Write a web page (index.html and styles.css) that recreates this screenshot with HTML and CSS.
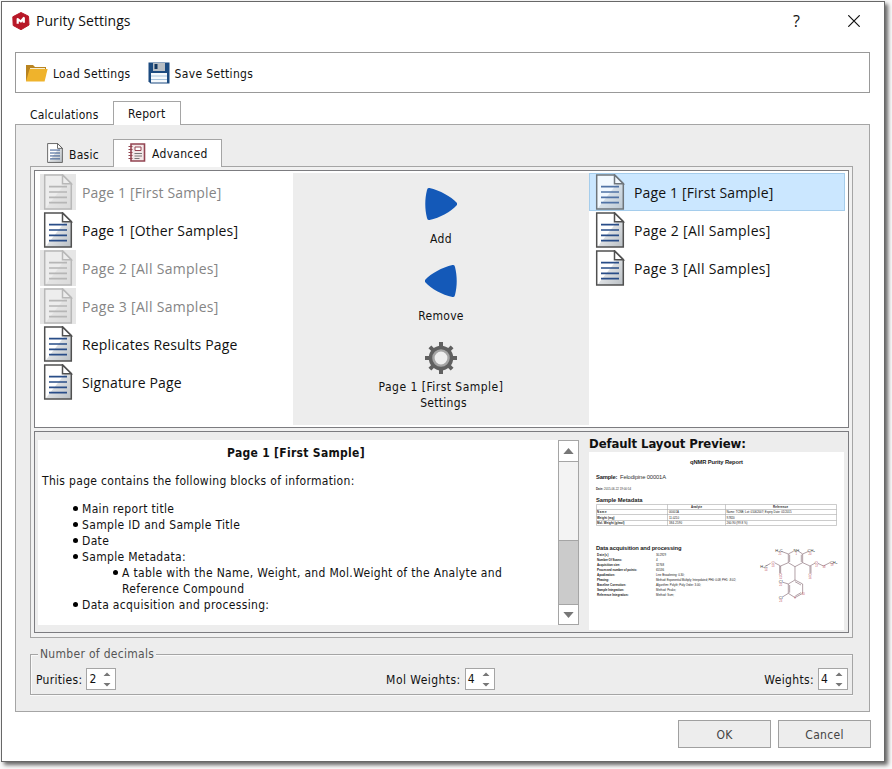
FILE: index.html
```html
<!DOCTYPE html>
<html lang="en">
<head>
<meta charset="utf-8">
<title>Purity Settings</title>
<link rel="stylesheet" href="styles.css">
</head>
<body>
<svg class="defs" aria-hidden="true">
  <defs>
    <linearGradient id="paper" x1="0" y1="0" x2="1" y2="1">
      <stop offset="0.5" stop-color="#fff"/><stop offset="0.52" stop-color="#dde0e3"/><stop offset="1" stop-color="#b9bfc4"/>
    </linearGradient>
    <symbol id="page" viewBox="0 0 36 36">
      <path d="M4.7 1h18l8.600 8.500V35H4.700z" fill="url(#paper)" stroke="#505050" stroke-width="1.500"/>
      <path d="M22.500 1v8.700h8.800z" fill="#fff" stroke="#505050" stroke-width="1.500"/>
      <path d="M9 12.700h18M9 18h18M9 23.300h18M9 28.600h18" stroke="#294d88" stroke-width="1.700"/>
    </symbol>
  </defs>
</svg>
<main class="window">
  <header class="titlebar">
    <svg class="logo" viewBox="0 0 18 18"><path d="M9 .5 16.500 4.200 17 13 9 17.700 1.200 13.500.800 4.800z" fill="#b81828" stroke="#b81828" stroke-linejoin="round"/><path d="M5.700 11.800V7l3.200 2.500L11.800 6v4.800" fill="none" stroke="#fff" stroke-width="2.200" stroke-linejoin="round"/></svg>
    <h1>Purity Settings</h1>
    <span class="help">?</span>
    <svg class="close" viewBox="0 0 12 12"><path d="M.3.300l11.400 11.400M11.700.300.300 11.700" stroke="#111" stroke-width="1.200"/></svg>
  </header>

  <div class="toolbar">
    <div class="tool">
      <svg class="folder" viewBox="0 0 23 18"><path d="M1 17V1h7l2 2h11v4z" fill="#b98420"/><path d="M5 4h15v4H5z" fill="#f7eed2"/><path d="M1 17.500 4.600 5h18l-3 12.500z" fill="#efb32c"/></svg>
      <span class="t-load">Load Settings</span>
    </div>
    <div class="tool">
      <svg class="disk" viewBox="0 0 22 22"><path d="M.5.500h21v21h-19l-2-2z" fill="#1c4b80"/><path d="M5 1h12v8H5z" fill="#b8bec4"/><path d="M6.500 2h3v5h-3z" fill="#123761"/><path d="M3 11h16v9.500H3z" fill="#f5f9fc"/><path d="M3 14h16M3 17.500h16" stroke="#a8c3dc"/></svg>
      <span class="t-save">Save Settings</span>
    </div>
  </div>

  <nav class="tabs outer-tabs">
    <span class="tab idle calc">Calculations</span>
    <span class="tab active report">Report</span>
  </nav>

  <section class="panel">
    <nav class="tabs inner-tabs">
      <span class="tab idle basic"><svg class="mini" viewBox="4 0 28 36"><use href="#page" width="36" height="36"/></svg><span>Basic</span></span>
      <span class="tab active advanced"><svg class="book" viewBox="0 0 18 19"><path d="M3 1h13.500v17H3z" fill="#f3e8e8" stroke="#934452" stroke-width="1.600"/><path d="M.5 3.500h4M.5 6.500h4M.5 9.500h4M.5 12.500h4M.5 15.500h4" stroke="#93444f" stroke-width="1.200"/><path d="M7 4h6v3.500H7z" fill="#fff" stroke="#934452"/><path d="M6.500 10.500h7.500M6.500 13h7.500M6.500 15.500h5" stroke="#777"/></svg><span>Advanced</span></span>
    </nav>

    <div class="subpanel">
      <div class="pane chooser">
        <ul class="list">
          <li class="disabled"><svg><use href="#page"/></svg><span class="w-first">Page 1 [First Sample]</span></li>
          <li><svg><use href="#page"/></svg><span class="w-other">Page 1 [Other Samples]</span></li>
          <li class="disabled"><svg><use href="#page"/></svg><span class="w-all">Page 2 [All Samples]</span></li>
          <li class="disabled"><svg><use href="#page"/></svg><span class="w-all">Page 3 [All Samples]</span></li>
          <li><svg><use href="#page"/></svg><span class="w-rep">Replicates Results Page</span></li>
          <li><svg><use href="#page"/></svg><span class="w-sig">Signature Page</span></li>
        </ul>
        <div class="actions">
          <div class="action add"><svg viewBox="0 0 32 32"><path d="M4.500 0C15 2.500 26 8.500 31.500 14.500Q33 16 31.500 17.500C26 23.500 15 30 4.500 32Q2.500 32.300 2 30C-.3 21-.3 11 2 2Q2.500-.300 4.500 0z" fill="#1459b8"/></svg><span>Add</span></div>
          <div class="action remove"><svg viewBox="0 0 32 32"><path d="M27.500 0C17 2.500 6 8.500.500 14.500Q-1 16 .500 17.500C6 23.500 17 30 27.500 32Q29.500 32.300 30 30C32.300 21 32.300 11 30 2Q29.500-.300 27.500 0z" fill="#1459b8"/></svg><span>Remove</span></div>
          <div class="action config"><svg viewBox="0 0 32 32"><g stroke="#606060" stroke-width="4"><path d="M16 0v32M0 16h32M4.900 4.900l22.200 22.200M27.100 4.900 4.900 27.100"/></g><circle cx="16" cy="16" r="9.800" fill="#eee" stroke="#606060" stroke-width="5"/><circle cx="16" cy="16" r="7.600" fill="#eee" stroke="#a5a5a5" stroke-width="2.400"/></svg><span class="t-conf">Page 1 [First Sample]</span><span class="t-conf2">Settings</span></div>
        </div>
        <ul class="list">
          <li class="selected"><svg><use href="#page"/></svg><span class="w-first">Page 1 [First Sample]</span></li>
          <li><svg><use href="#page"/></svg><span class="w-all">Page 2 [All Samples]</span></li>
          <li><svg><use href="#page"/></svg><span class="w-all">Page 3 [All Samples]</span></li>
        </ul>
      </div>

      <div class="pane details">
        <div class="description">
          <article>
            <h2>Page 1 [First Sample]</h2>
            <p>This page contains the following blocks of information:</p>
            <ul>
              <li>Main report title</li>
              <li>Sample ID and Sample Title</li>
              <li>Date</li>
              <li>Sample Metadata:
                <ul><li>A table with the Name, Weight, and Mol.Weight of the Analyte and<br>Reference Compound</li></ul>
              </li>
              <li>Data acquisition and processing:</li>
            </ul>
          </article>
          <div class="scrollbar">
            <span class="sb-btn"><svg viewBox="0 0 12 7"><path d="M0 7 6 0l6 7z"/></svg></span>
            <span class="thumb"></span>
            <span class="sb-btn bottom"><svg viewBox="0 0 12 7"><path d="M0 0l6 7 6-7z"/></svg></span>
          </div>
        </div>
        <div class="preview">
          <h3>Default Layout Preview:</h3>
          <svg class="sheet" viewBox="0 0 255 178">
            <g font-weight="bold" fill="#222">
              <text x="101" y="12" font-size="5.800" textLength="53">qNMR Purity Report</text>
              <text x="7" y="27.300" font-size="5.800" textLength="21.500">Sample:</text>
              <text x="7" y="50" font-size="5.800" textLength="46.500">Sample Metadata</text>
              <text x="7" y="98.300" font-size="5.800" textLength="85.500">Data acquisition and processing</text>
            </g>
            <text x="31" y="27.300" font-size="5.800" textLength="46">Felodipine 00001A</text>
            <text x="7" y="37.500" font-size="2.900" textLength="35"><tspan font-weight="bold">Date:</tspan> 2015-06-22 19:00:54</text>
            <path d="M7.500 52.500h240v21h-240zM7.500 57.500h240M7.500 62.500h240M7.500 68.500h240M78.500 52.500v21M136.500 52.500v21" fill="none" stroke="#aaa" stroke-width=".6"/>
            <g font-size="2.900" fill="#222">
              <g font-weight="bold">
                <text x="102" y="56" textLength="11">Analyte</text>
                <text x="184" y="56" textLength="15">Reference</text>
                <text x="8" y="61.300" textLength="9.500">Name</text>
                <text x="8" y="66.600" textLength="17.500">Weight (mg)</text>
                <text x="8" y="72" textLength="27.500">Mol. Weight (g/mol)</text>
              </g>
              <text x="80" y="61.300" textLength="10">00001A</text>
              <text x="80" y="66.600" textLength="10">11.0210</text>
              <text x="80" y="72" textLength="13">384.2590</text>
              <text x="137.500" y="61.300" textLength="65">Name: TCNB; Lot: 01062007; Expiry Date: 01/2015</text>
              <text x="137.500" y="66.600" textLength="8">9.7820</text>
              <text x="137.500" y="72" textLength="21">260.90 (99.8 %)</text>
            </g>
            <g font-size="3" font-weight="bold" fill="#222">
              <text x="8" y="103.500" textLength="11.500">Date(s)</text>
              <text x="8" y="108.500" textLength="25">Number Of Scans:</text>
              <text x="8" y="113.500" textLength="23">Acquisition size:</text>
              <text x="8" y="118.500" textLength="40">Processed number of points:</text>
              <text x="8" y="123.500" textLength="18">Apodization:</text>
              <text x="8" y="128.500" textLength="12">Phasing:</text>
              <text x="8" y="133.500" textLength="29">Baseline Correction:</text>
              <text x="8" y="138.500" textLength="27">Sample Integration:</text>
              <text x="8" y="143.500" textLength="31.500">Reference Integration:</text>
            </g>
            <g font-size="2.900" fill="#222">
              <text x="67" y="103.500" textLength="10">30.2929</text>
              <text x="67" y="108.500">4</text>
              <text x="67" y="113.500" textLength="8">32768</text>
              <text x="67" y="118.500" textLength="8">65536</text>
              <text x="67" y="123.500" textLength="28.500">Line Broadening: 0.30;</text>
              <text x="67" y="128.500" textLength="80">Method: Exponential Multiply; Interpolated; PH0: 0.08; PH1: -8.02;</text>
              <text x="67" y="133.500" textLength="45">Algorithm: Polyfit; Poly Order: 3.00;</text>
              <text x="67" y="138.500" textLength="20">Method: Peaks;</text>
              <text x="67" y="143.500" textLength="18">Method: Sum;</text>
            </g>
            <g transform="translate(-9 78) scale(.3333)">
              <path d="M604 64 625 72 640 64M656 64 668 72 686 64M625 72v26l20 12 23-12V72M629 74v22M664 74v22M625 98l-23 10-17-9M572 100l-14 8M602 108v22M599 108v22M668 98l22 10 16-9M690 108v22M693 108v22M714 100l16 8 20-10M645 110v40l-20 12v28l20 13 23-13v-28l-23-12M629 165v23M645 155l18 10M646 198l17-10M625 162l-16-5M625 190l-16 10" fill="none" stroke="#8a6f79" stroke-width="2"/>
              <g font-size="12" text-anchor="middle" fill="#333">
                <text x="597" y="65">H₃C</text><text x="649" y="65">NH</text><text x="694" y="65">CH₃</text>
                <text x="552" y="114">H₃C</text><text x="761" y="101">CH₃</text>
                <g fill="#b04a58"><text x="579" y="101">O</text><text x="602" y="139">O</text><text x="690" y="139">O</text><text x="709" y="101">O</text></g>
                <text x="602" y="158">Cl</text><text x="602" y="208">Cl</text>
              </g>
              <g font-size="8" text-anchor="middle" fill="#c04a58"><text x="600" y="74">21</text><text x="649" y="76">1</text><text x="690" y="74">20</text><text x="558" y="122">14</text><text x="579" y="110">13</text><text x="602" y="148">12</text><text x="690" y="148">16</text><text x="710" y="110">17</text><text x="732" y="115">18</text><text x="756" y="109">19</text><text x="602" y="167">22</text><text x="602" y="217">23</text><text x="645" y="207">9</text><text x="670" y="195">10</text></g>
            </g>
          </svg>
        </div>
      </div>
    </div>

    <div class="decimals">
      <span class="legend">Number of decimals</span>
      <label><span class="t-pur">Purities:</span><span class="spin">2<svg viewBox="0 0 8 16"><path d="M.5 5 4 1.500 7.500 5zM.5 12 4 15.500 7.500 12z"/></svg></span></label>
      <label><span class="t-mol">Mol Weights:</span><span class="spin">4<svg viewBox="0 0 8 16"><path d="M.5 5 4 1.500 7.500 5zM.5 12 4 15.500 7.500 12z"/></svg></span></label>
      <label><span class="t-wei">Weights:</span><span class="spin">4<svg viewBox="0 0 8 16"><path d="M.5 5 4 1.500 7.500 5zM.5 12 4 15.500 7.500 12z"/></svg></span></label>
    </div>
  </section>

  <footer>
    <span class="button ok">OK</span>
    <span class="button">Cancel</span>
  </footer>
</main>
</body>
</html>
```
FILE: styles.css
```css
* { box-sizing: border-box; }
body {
  margin: 0;
  height: 769px;
  padding: 1px;
  overflow: hidden;
  background: #fafafa;
  color: #111;
  font: 12px/16px "DejaVu Sans Condensed", "DejaVu Sans", sans-serif;
  font-stretch: condensed;
  letter-spacing: 0.3px;
  white-space: nowrap;
}
h1, h2, h3, p, ul { margin: 0; padding: 0; }
svg { display: block; flex: none; }
.defs { position: absolute; width: 0; height: 0; }
.window {
  width: 884px;
  height: 761px;
  padding: 0 14px 0 13px;
  border: 1px solid #686868;
  background: #fff;
  box-shadow: 3px 3px 4px #666;
}

.titlebar { display: flex; align-items: center; height: 50px; padding: 0 10px 13px 0; margin-left: -3px; }
.logo { width: 18px; height: 18px; }
h1 { margin-left: 6px; font: 14px/20px "Open Sans", sans-serif; letter-spacing: 0.05px; }
.help { margin-left: auto; width: 8px; font: 16px/20px "Open Sans", sans-serif; letter-spacing: 0; }
.close { width: 12px; height: 12px; margin-left: 47px; }

.toolbar { display: flex; gap: 17px; height: 41px; padding: 0 9px; border: 1px solid #999; align-items: center; }
.tool { display: flex; align-items: center; gap: 5px; }
.tool span { padding-top: 2px; }
.t-save { letter-spacing: 0.35px; }
.folder { width: 23px; height: 18px; }
.disk { width: 22px; height: 22px; }

.tabs { display: flex; align-items: flex-end; position: relative; z-index: 1; }
.tab.active { border: 1px solid #a5a5a5; border-bottom: 0; background: #fff; }
.outer-tabs { height: 32px; margin-bottom: -1px; }
.calc { width: 98px; padding: 0 0 2px 15px; letter-spacing: 0.22px; }
.report { width: 68px; height: 24px; padding: 4px 0 0 14px; }
.panel { height: 588px; padding: 14px 16px 0 14px; border: 1px solid #a5a5a5; background: #ededed; }
.inner-tabs { height: 28px; margin-bottom: -1px; }
.basic { display: flex; align-items: center; gap: 6px; width: 83px; height: 27px; padding: 0 0 1px 17px; }
.basic span { padding-top: 3px; }
.mini { width: 16px; height: 20px; }
.advanced { display: flex; gap: 6px; width: 109px; height: 28px; padding: 3px 0 0 14px; }
.advanced span { padding-top: 3px; }
.book { width: 18px; height: 19px; }

.subpanel { height: 472px; padding: 3px; border: 1px solid #a5a5a5; background: #f1f1f1; }
.pane { border: 1px solid #7c7c80; }
.chooser { display: grid; grid-template-columns: 256px 296px 256px; height: 258px; padding: 2px; background: #fff; }
.list { list-style: none; background: #fff; font: 14px/20px "Open Sans", sans-serif; letter-spacing: 0.15px; }
.w-all { letter-spacing: 0.3px; }
.list li { display: flex; align-items: center; gap: 6px; height: 38px; padding-left: 3px; }
.list svg { width: 36px; height: 36px; }
.list span { margin-top: 1px; }
.list .disabled { color: #858585; }
.list .disabled svg { background: #e6e6e6; filter: grayscale(1); }
.list .disabled use { opacity: .3; }
.list .selected { background: #cbe7ff; border: 1px solid #a5cdec; padding-left: 2px; }
.list .selected svg { opacity: .75; }
.actions { background: #ededed; padding-top: 15px; }
.action { display: flex; flex-direction: column; align-items: center; height: 77px; }
.action svg { width: 32px; height: 32px; margin-bottom: 11px; }
.action.config svg { margin-bottom: 5px; }
.t-conf { letter-spacing: 0.48px; }
.t-conf2 { padding-left: 5px; }

.details { display: flex; height: 202px; margin-top: 3px; padding: 8px 3px 0; background: #ededed; }
.description { display: flex; width: 541px; height: 185px; background: #fff; }
article { width: 520px; padding: 5px 4px; }
h2 { font-size: 12px; line-height: 16px; text-align: center; padding-right: 4px; }
article p { margin: 12px 0; letter-spacing: 0.31px; }
article ul { list-style: none; padding-left: 40px; }
article li { position: relative; letter-spacing: 0.33px; }
article li::before { content: ""; position: absolute; left: -9.5px; top: 4.5px; width: 5.5px; height: 5.5px; border-radius: 50%; background: #000; }
.scrollbar { display: flex; flex-direction: column; width: 21px; background: #cbcbcb; border: 1px solid #a5a5a5; }
.sb-btn { display: grid; place-items: center; height: 20px; background: #fff; }
.sb-btn svg { width: 11px; height: 6px; fill: #777; }
.sb-btn.bottom { margin-top: auto; border-top: 1px solid #a5a5a5; }
.thumb { height: 80px; background: #f3f3f3; border: solid #a5a5a5; border-width: 1px 0; }
.preview { width: 255px; margin: -5px 0 0 10px; }
h3 { height: 17px; font-size: 13px; line-height: 17px; letter-spacing: -0.07px; }
.sheet { width: 255px; height: 178px; background: #fff; fill: #333; font-family: "Liberation Sans", sans-serif; letter-spacing: 0; }

.decimals { position: relative; display: flex; justify-content: space-between; align-items: center; height: 41px; margin-top: 16px; padding: 9px 4px 0 5px; border: 1px solid #a5a5a5; box-shadow: inset 1px 1px #fafafa, 0 1px #fafafa; }
.legend { position: absolute; left: 7px; top: -9px; padding: 0 2px; background: #ededed; color: #555; }
.decimals label { display: flex; align-items: center; gap: 4px; }
.decimals label > span:first-child { padding-top: 2px; }
.t-mol { letter-spacing: 0.45px; }
.t-wei { letter-spacing: 0.35px; }
.spin { display: flex; align-items: center; justify-content: space-between; width: 30px; height: 22px; padding: 0 4px 0 2px; border: 1px solid #a5a5a5; background: #fff; }
.spin svg { width: 8px; height: 16px; fill: #777; }

footer { display: flex; justify-content: flex-end; gap: 7px; margin: 8px -1px 0 0; }
.button { width: 93px; height: 28px; border: 1px solid #a0a0a0; background: #ededed; color: #444; text-align: center; line-height: 28px; }
```
